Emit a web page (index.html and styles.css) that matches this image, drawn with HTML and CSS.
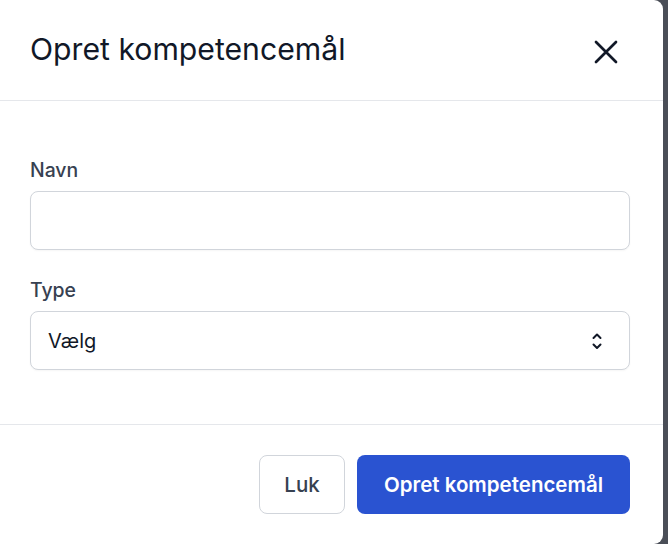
FILE: index.html
```html
<!DOCTYPE html>
<html lang="da">
<head>
<meta charset="utf-8">
<title>Opret kompetencemål</title>
<link rel="stylesheet" href="styles.css">
</head>
<body>
<div class="modal">
  <div class="modal-header">
    <h2 class="modal-title">Opret kompetencemål</h2>
    <button class="close-btn" type="button" aria-label="Luk">
      <svg width="24" height="24" viewBox="0 0 24 24" fill="none" stroke="#111827" stroke-width="2.7" stroke-linecap="round"><path d="M2 2L22 22M22 2L2 22"/></svg>
    </button>
  </div>
  <div class="modal-body">
    <div class="field">
      <label class="field-label">Navn</label>
      <div class="input"></div>
    </div>
    <div class="field">
      <label class="field-label">Type</label>
      <div class="input select">
        <span class="select-value">Vælg</span>
        <svg class="chevrons" width="12" height="20" viewBox="0 0 12 20" fill="none" stroke="#111827" stroke-width="2" stroke-linecap="round" stroke-linejoin="round"><path d="M2.5 7L6 3.5L9.5 7M2.5 13.5L6 17L9.5 13.5"/></svg>
      </div>
    </div>
  </div>
  <div class="modal-footer">
    <button class="btn btn-secondary" type="button">Luk</button>
    <button class="btn btn-primary" type="button">Opret kompetencemål</button>
  </div>
</div>
</body>
</html>
```
FILE: styles.css
```css
html, body {
  margin: 0;
  padding: 0;
}
body {
  background: #4a4e57;
  font-family: Inter, "Noto Sans", "Liberation Sans", sans-serif;
  width: 668px;
  height: 544px;
  overflow: hidden;
}
.modal {
  width: 663px;
  height: 544px;
  background: #ffffff;
  border-radius: 0 9px 9px 0;
  display: flex;
  flex-direction: column;
}
.modal-header {
  height: 100px;
  border-bottom: 1px solid #e5e7eb;
  display: flex;
  align-items: center;
  justify-content: space-between;
  padding: 0 45px 0 30px;
}
.modal-title {
  margin: 0 0 3px 0;
  font-size: 30.2px;
  font-weight: 400;
  color: #111827;
  line-height: 36px;
}
.close-btn {
  background: none;
  border: 0;
  padding: 0;
  width: 24px;
  height: 24px;
  display: flex;
  margin-top: 3px;
}
.modal-body {
  height: 323px;
  box-sizing: border-box;
  padding: 55px 33px 0 30px;
  display: flex;
  flex-direction: column;
  gap: 26px;
}
.field {
  display: flex;
  flex-direction: column;
  gap: 7px;
}
.field-label {
  font-size: 19.4px;
  font-weight: 500;
  color: #374151;
  line-height: 28px;
}
.input {
  height: 59px;
  box-sizing: border-box;
  border: 1px solid #d1d5db;
  border-radius: 8px;
  background: #fff;
  box-shadow: 0 1px 2px rgba(0,0,0,0.04);
}
.select {
  display: flex;
  align-items: center;
  justify-content: space-between;
  padding: 0 26px 0 17px;
}
.select-value {
  font-size: 20px;
  color: #111827;
}
.chevrons {
  display: block;
}
.modal-footer {
  border-top: 1px solid #e5e7eb;
  flex: 1;
  display: flex;
  justify-content: flex-end;
  align-items: flex-start;
  gap: 12px;
  padding: 30px 33px 0 0;
}
.btn {
  height: 59px;
  box-sizing: border-box;
  border-radius: 8px;
  font-family: inherit;
  font-size: 20.5px;
  padding: 0;
}
.btn-secondary {
  background: #fff;
  border: 1px solid #d1d5db;
  color: #374151;
  font-weight: 500;
  width: 86px;
}
.btn-primary {
  background: #2a53d1;
  border: 0;
  color: #fff;
  font-weight: 600;
  width: 273px;
}
```
